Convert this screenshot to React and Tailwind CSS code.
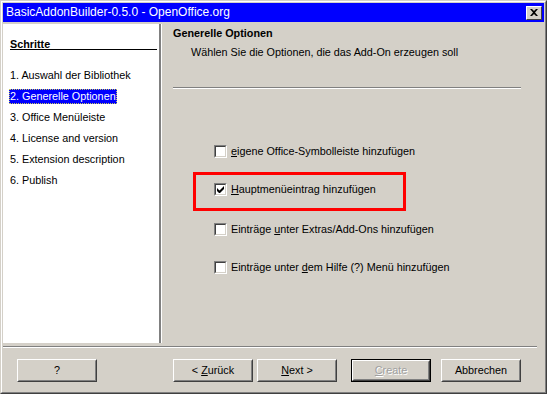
import React from "react";

const steps = [
  "1. Auswahl der Bibliothek",
  "2. Generelle Optionen",
  "3. Office Menüleiste",
  "4. License and version",
  "5. Extension description",
  "6. Publish",
];

const CheckBox = ({ checked }) => (
  <span className="inline-flex w-[13px] h-[13px] shrink-0 border border-t-[#808080] border-l-[#808080] border-r-white border-b-white">
    <span className="flex items-center justify-center w-full h-full bg-white border border-t-[#404040] border-l-[#404040] border-r-[#d4d0c8] border-b-[#d4d0c8]">
      {checked && (
        <svg width="7" height="7" viewBox="0 0 7 7">
          <path d="M0 2v3l2 2h1l4-4V0L2.5 4.5z" fill="#000" />
        </svg>
      )}
    </span>
  </span>
);

const Option = ({ checked, children }) => (
  <div className="flex items-center h-[13px]">
    <CheckBox checked={checked} />
    <span className="ml-[4px] leading-[13px] whitespace-nowrap">{children}</span>
  </div>
);

const Button = ({ children, isDefault, disabled, className = "" }) => (
  <div
    className={`w-[80px] h-[23px] ${isDefault ? "border border-black" : ""} ${className}`}
  >
    <div className="w-full h-full border border-t-white border-l-white border-r-[#404040] border-b-[#404040]">
      <div
        className={`w-full h-full flex items-center justify-center border border-t-[#d4d0c8] border-l-[#d4d0c8] border-r-[#808080] border-b-[#808080] ${
          disabled ? "text-[#a0a0a0] [text-shadow:1px_1px_0_#fff]" : "text-black"
        }`}
      >
        {children}
      </div>
    </div>
  </div>
);

export default function App() {
  return (
    <div className="w-[547px] h-[394px] bg-[#d4d0c8] font-['Liberation_Sans',Arial,sans-serif] text-[10.8px] text-black border border-t-[#d4d0c8] border-l-[#d4d0c8] border-r-[#404040] border-b-[#404040]">
      <div className="w-full h-full p-[1px] flex flex-col border border-t-white border-l-white border-r-[#808080] border-b-[#808080]">
        {/* Title bar */}
        <div className="h-[19px] shrink-0 bg-[#0000ff] flex items-center pl-[3px] pr-[2px]">
          <span className="text-white text-[12px] leading-[19px] whitespace-nowrap">
            BasicAddonBuilder-0.5.0 - OpenOffice.org
          </span>
          <div className="ml-auto w-[16px] h-[14px] bg-[#d4d0c8] border border-t-white border-l-white border-r-[#404040] border-b-[#404040] flex items-center justify-center">
            <svg width="8" height="7" viewBox="0 0 8 7">
              <path d="M0 0h2l2 2 2-2h2L5 3.5 8 7H6L4 5 2 7H0l3-3.5z" fill="#000" />
            </svg>
          </div>
        </div>

        {/* Body */}
        <div className="flex mt-[2px] h-[319px] shrink-0">
          <div className="w-[158px] bg-white border-r-[2px] border-r-[#808080] pl-[7px] pr-[2px]">
            <div className="mt-[12px] h-[14px] leading-[16px] font-bold border-b border-black">
              Schritte
            </div>
            <div className="mt-[18px] flex flex-col gap-[6px]">
              {steps.map((s, i) => (
                <div key={s} className="h-[15px] leading-[15px] whitespace-nowrap">
                  {i === 1 ? (
                    <span className="inline-block -ml-[1px] pl-[1px] pr-[1px] h-[15px] bg-[#0000ff] text-white outline outline-1 outline-dotted outline-[#c8c860] -outline-offset-1">
                      {s}
                    </span>
                  ) : (
                    s
                  )}
                </div>
              ))}
            </div>
          </div>

          <div className="flex-1 border-l border-l-white">
            <div className="pl-[11px]">
              <div className="mt-[2px] h-[14px] leading-[14px] font-bold">
                Generelle Optionen
              </div>
              <div className="mt-[5px] pl-[18px] h-[14px] leading-[14px]">
                Wählen Sie die Optionen, die das Add-On erzeugen soll
              </div>
              <div className="mt-[28px] w-[348px] border-t border-t-[#808080] border-b border-b-white" />
            </div>

            <div className="pl-[52px]">
              <div className="mt-[56px]">
                <Option>
                  <span className="underline">e</span>igene Office-Symbolleiste hinzufügen
                </Option>
              </div>
              <div className="mt-[14px] -ml-[21px] w-[213px] h-[39px] border-[3px] border-[#ff0000] pl-[18px] pt-[8px]">
                <Option checked>
                  <span className="underline">H</span>auptmenüeintrag hinzufügen
                </Option>
              </div>
              <div className="mt-[12px]">
                <Option>
                  Einträge <span className="underline">u</span>nter Extras/Add-Ons hinzufügen
                </Option>
              </div>
              <div className="mt-[25px]">
                <Option>
                  Einträge unter <span className="underline">d</span>em Hilfe (?) Menü hinzufügen
                </Option>
              </div>
            </div>
          </div>
        </div>

        {/* Separator */}
        <div className="mt-[3px] w-[534px] border-t border-t-[#808080] border-b border-b-white" />

        {/* Buttons */}
        <div className="flex mt-[11px]">
          <Button className="ml-[14px]">?</Button>
          <Button className="ml-[76px]">
            &lt; <span className="underline ml-[3px]">Z</span>urück
          </Button>
          <Button className="ml-[4px]">
            <span className="underline">N</span>ext &gt;
          </Button>
          <Button className="ml-[14px]" isDefault disabled>
            <span className="underline">C</span>reate
          </Button>
          <Button className="ml-[10px]">Abbrechen</Button>
        </div>
      </div>
    </div>
  );
}
